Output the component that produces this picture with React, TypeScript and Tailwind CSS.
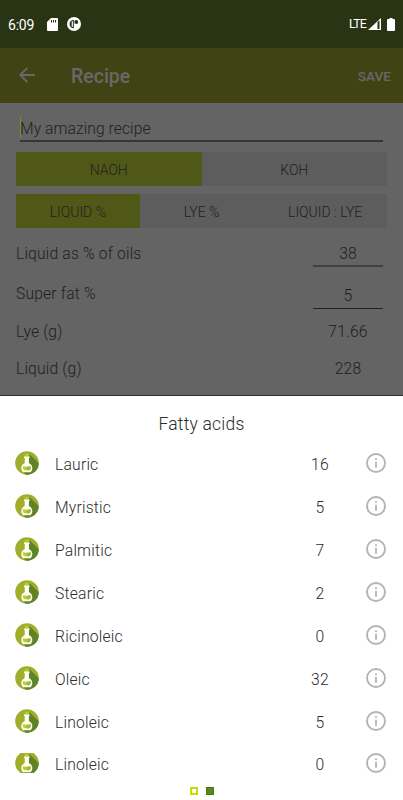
import clsx from 'clsx';

type Acid = { name: string; value: number };

const ACIDS: Acid[] = [
    { name: 'Lauric', value: 16 },
    { name: 'Myristic', value: 5 },
    { name: 'Palmitic', value: 7 },
    { name: 'Stearic', value: 2 },
    { name: 'Ricinoleic', value: 0 },
    { name: 'Oleic', value: 32 },
    { name: 'Linoleic', value: 5 },
    { name: 'Linoleic', value: 0 },
];

function StatusBar() {
    return (
        <div className="flex h-12 items-center bg-[#283414] pl-2 pr-2 text-white">
            <span className="w-[38px] pt-[1px] text-[14px] leading-none tracking-[-0.2px]">6:09</span>
            <svg className="ml-[1px]" width="11" height="13" viewBox="0 0 11 13">
                <path d="M4 0h6a1 1 0 0 1 1 1v11a1 1 0 0 1-1 1H1a1 1 0 0 1-1-1V4z" fill="#fff" />
                <path d="M4.5 2v2.500M6.500 2v2.500M8.500 2v2.500" stroke="#283414" strokeWidth="1" />
            </svg>
            <svg className="ml-[9px]" width="14" height="14" viewBox="0 0 14 14">
                <circle cx="7" cy="7" r="7" fill="#fff" />
                <path d="M6.900 3v8.300H6Q2.600 10.500 2.600 7T6 3z" fill="#283414" />
                <path d="M5.300 4.200v5.600" stroke="#fff" strokeWidth="1.200" />
                <circle cx="9.300" cy="5" r="1.900" fill="#283414" />
            </svg>
            <span className="ml-auto text-[12.500px] leading-none tracking-[-0.9px]">LTE</span>
            <svg className="ml-[2px]" width="13" height="12" viewBox="0 0 13 12">
                <path d="M13 0v12H0z" fill="#fff" />
                <path d="M9.500 4v7h2V2.500z" fill="#283414" />
            </svg>
            <svg className="ml-[6px]" width="8" height="13" viewBox="0 0 8 13">
                <path d="M2.500 0h3v1H7a1 1 0 0 1 1 1v10a1 1 0 0 1-1 1H1a1 1 0 0 1-1-1V2a1 1 0 0 1 1-1h1.500z" fill="#fff" />
            </svg>
        </div>
    );
}

function AppBar() {
    return (
        <div className="flex h-[55px] items-center bg-[#404414] pl-[19px] pr-3 text-[#68686a]">
            <svg className="mb-[1px]" width="16" height="16" viewBox="0 0 16 16" fill="none" stroke="currentColor" strokeWidth="1.900">
                <path d="M16 8H1.500M8.300 .9L1.300 8l7 7.100" />
            </svg>
            <h1 className="ml-9 pt-[2px] text-[19.500px] font-medium leading-none">Recipe</h1>
            <button className="ml-auto pt-[2px] text-[13.700px] font-medium leading-none">SAVE</button>
        </div>
    );
}

function Toggle({ options, className }: { options: string[]; className?: string }) {
    return (
        <div className={clsx('flex h-[34px] bg-[#5d5d5d] text-[14px] tracking-[-0.03px] text-[#202020]', className)}>
            {options.map((option, i) => (
                <div key={option} className={clsx('flex flex-1 items-center justify-center pt-[2px]', i === 0 && 'bg-[#505818]')}>
                    {option}
                </div>
            ))}
        </div>
    );
}

function Flask({ clipped }: { clipped: boolean }) {
    return (
        <svg width="24" height={clipped ? 20 : 24} viewBox={clipped ? '0 2 24 20' : '0 0 24 24'}>
            <defs>
                <clipPath id="disc">
                    <circle cx="12" cy="12" r="11.800" />
                </clipPath>
            </defs>
            <g clipPath="url(#disc)">
                <path d="M0 0h24v24H0z" fill="#a0ae2b" />
                <path d="M14.500 3L26 14.500V26H12L8 20l5-7z" fill="#5f8329" />
            </g>
            <path d="M9.800 2.800h4v3h-4z" fill="#b5cc2e" />
            <path d="M9 5.500h5.600v1.400h-.7v5c2 1.100 3.400 2.600 3.400 5 0 2-.8 3.300-1.900 4.400H8.200c-1.100-1.100-1.900-2.400-1.900-4.400 0-2.400 1.400-3.900 3.400-5v-5H9z" fill="#fffff0" />
            <path d="M7.900 15.300q4 .8 7.800 0c.3 1.800-.3 3-1.200 3.900H9.100c-.9-.9-1.500-2.100-1.200-3.900z" fill="#b7cd3c" />
            <path d="M11.800 15.800q2 0 3.900-.5c.3 1.800-.3 3-1.200 3.900h-2.700z" fill="#9fb93a" />
        </svg>
    );
}

function InfoIcon() {
    return (
        <svg width="20" height="20" viewBox="0 0 20 20" fill="none" stroke="#b4b4b4">
            <circle cx="10" cy="10" r="9" strokeWidth="1.900" />
            <path d="M10 5.200v1.900M10 8.800v6" strokeWidth="1.800" />
        </svg>
    );
}

export default function App() {
    return (
        <div className="flex h-[800px] w-[403px] flex-col overflow-hidden bg-white font-['Roboto',sans-serif]">
            <StatusBar />
            <AppBar />
            <main className="flex h-[293px] flex-col border-b border-[#302c30] bg-[#646464] px-4 text-[15.700px] font-light tracking-[0.16px] text-[#202020]">
                <div className="ml-1 mr-1 mt-[13px] flex h-[26px] items-center border-b-2 border-[#363638]">
                    <div className="-mt-[1px] h-[21px] w-0 border-l border-[#7f9018]" />
                    <span className="-ml-[1px] pt-[1px] tracking-[0.06px]">My amazing recipe</span>
                </div>
                <Toggle options={['NAOH', 'KOH']} className="mt-[10px]" />
                <Toggle options={['LIQUID %', 'LYE %', 'LIQUID : LYE']} className="mt-2" />
                <div className="mt-2 flex h-[31px] justify-between">
                    <span className="pt-[6px]">Liquid as % of oils</span>
                    <span className="mr-1 w-[70px] border-b-2 border-[#414141] pt-[6px] text-center">38</span>
                </div>
                <div className="mt-2 flex h-[34px] justify-between">
                    <span className="pt-[7px]">Super fat %</span>
                    <span className="mr-1 w-[70px] border-b border-[#222] pt-[9px] text-center">5</span>
                </div>
                <div className="mt-1 flex h-[38px] items-center justify-between">
                    <span>Lye (g)</span>
                    <span className="mr-1 w-[70px] text-center">71.66</span>
                </div>
                <div className="flex h-9 items-center justify-between">
                    <span>Liquid (g)</span>
                    <span className="mr-1 w-[70px] text-center">228</span>
                </div>
            </main>
            <section className="flex flex-1 flex-col text-[15.700px] font-light tracking-[0.2px] text-[#2c2c2c]">
                <h2 className="flex h-[45px] items-center justify-center pt-[12px] text-[17.500px]">Fatty acids</h2>
                {ACIDS.map((acid, i) => {
                    const last = i === ACIDS.length - 1;
                    return (
                        <div key={i} className={clsx('flex items-center pl-[15px] pr-[17px]', last ? 'h-[41px]' : 'h-[43px]')}>
                            <Flask clipped={last} />
                            <span className="ml-4 pt-[4px]">{acid.name}</span>
                            <span className="ml-auto w-[50px] pt-[4px] text-center">{acid.value}</span>
                            <div className="ml-[21px]">
                                <InfoIcon />
                            </div>
                        </div>
                    );
                })}
                <div className="mt-[4px] flex justify-center gap-2">
                    <span className="h-2 w-2 border-2 border-[#c8dc08] bg-white" />
                    <span className="h-2 w-2 border border-[#467a08] bg-[#5c8428]" />
                </div>
            </section>
        </div>
    );
}
